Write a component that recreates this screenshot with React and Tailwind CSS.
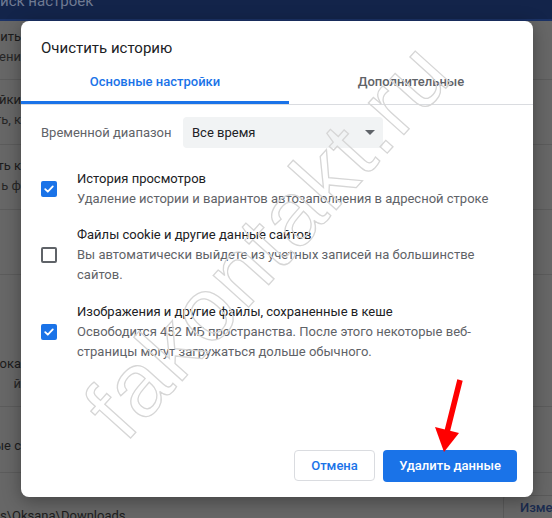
import React from 'react';

const rows = [
	{ h: 'h-[59px]', pt: 'pt-[6px]', lines: ['ить', 'ени'] },
	{ h: 'h-[65px]', pt: 'pt-[10px]', lines: ['йки', 'ть, к'] },
	{ h: 'h-[65px]', pt: 'pt-[11px]', lines: ['ть к', 'ь ф'] },
	{ h: 'h-[65px]', pt: 'pt-[10px]', lines: [] },
	{ h: 'h-[132px]', pt: 'pt-[79px]', lines: ['ока', 'й'] },
	{ h: 'h-[66px]', pt: 'pt-[29px]', lines: ['ые с'] },
];

const CheckBox = ({ checked }) =>
	checked ? (
		<div className="flex h-4 w-4 shrink-0 items-center justify-center rounded-[2px] bg-[#1a73e8]">
			<svg width="12" height="12" viewBox="0 0 12 12" fill="none">
				<path d="M2.2 6.2 4.8 8.7 9.8 3.4" stroke="white" strokeWidth="1.8" strokeLinecap="round" strokeLinejoin="round" />
			</svg>
		</div>
	) : (
		<div className="h-4 w-4 shrink-0 rounded-[2px] border-2 border-[#5f6368]" />
	);

const Item = ({ checked, title, text, className = '' }) => (
	<div className={`flex items-center gap-5 px-5 ${className}`}>
		<CheckBox checked={checked} />
		<div className="flex-1 text-[13px] leading-[20px]">
			<div className="text-[#202124]">{title}</div>
			<div className="text-[#5f6368]">{text}</div>
		</div>
	</div>
);

const App = () => {
	return (
		<div className="relative h-[518px] w-[552px] overflow-hidden bg-[#676767] font-['Roboto',sans-serif]">
			{/* dimmed settings page behind the dialog */}
			<div className="flex h-full flex-col">
				<div className="h-[21px] shrink-0 overflow-hidden border-b-2 border-[#1b3266] bg-[#13244a]">
					<div className="-mt-[9px] text-[15px] leading-[20px] text-[#6f7a92]">иск настроек</div>
				</div>
				{rows.map((row, i) => (
					<div key={i} className={`flex shrink-0 border-b border-[#5c5c5c] ${row.h}`}>
						<div className={`flex w-[21px] flex-col overflow-hidden ${row.pt}`}>
							{row.lines.map((line, j) => (
								<div
									key={line}
									className={`flex justify-end whitespace-nowrap text-[13px] leading-[20px] ${j === 0 ? 'text-[#1c1c1c]' : 'text-[#262626]'}`}
								>
									{line}
								</div>
							))}
						</div>
					</div>
				))}
				<div className="flex flex-1">
					<div className="flex-1 pt-[33px] text-[13px] leading-[20px] text-[#1c1c1c] whitespace-nowrap">s\Oksana\Downloads</div>
					<div className="mt-[22px] w-[49px] rounded-tl-[4px] border-l border-t border-[#5a5a5a] pl-[16px] pt-[2px] text-[13px] font-medium leading-[20px] text-[#1b2c50] whitespace-nowrap overflow-hidden">
						Изменить
					</div>
				</div>
			</div>

			{/* dialog */}
			<div className="absolute left-[21px] top-[21px] flex h-[476px] w-[512px] flex-col rounded-[8px] bg-white shadow-[0_4px_18px_rgba(0,0,0,0.35)]">
				<h2 className="px-5 pt-[17px] text-[15px] leading-[20px] text-[#202124]">Очистить историю</h2>

				<div className="mt-[5px] flex border-b border-[#dadce0]">
					<div className="flex w-[268px] flex-col">
						<div className="flex h-[38px] items-center justify-center text-[13px] font-medium text-[#1a73e8]">
							Основные настройки
						</div>
						<div className="h-[3px] bg-[#1a73e8]" />
					</div>
					<div className="flex flex-1 items-start justify-center">
						<div className="flex h-[38px] items-center text-[13px] font-medium text-[#5f6368]">Дополнительные</div>
					</div>
				</div>

				<div className="mt-[12px] flex items-center px-5">
					<div className="w-[142px] text-[13px] text-[#5f6368]">Временной диапазон</div>
					<div className="flex h-[31px] w-[200px] items-center rounded-[4px] bg-[#f1f3f4] pl-[9px] pr-[8px] text-[13px] text-[#202124]">
						Все время
						<svg className="ml-auto" width="10" height="5" viewBox="0 0 10 5">
							<polygon points="0,0 10,0 5,5" fill="#5f6368" />
						</svg>
					</div>
				</div>

				<Item
					className="mt-[21px]"
					checked
					title="История просмотров"
					text="Удаление истории и вариантов автозаполнения в адресной строке"
				/>
				<Item
					className="mt-4"
					title="Файлы cookie и другие данные сайтов"
					text="Вы автоматически выйдете из учетных записей на большинстве сайтов."
				/>
				<Item
					className="mt-[17px]"
					checked
					title="Изображения и другие файлы, сохраненные в кеше"
					text="Освободится 452 МБ пространства. После этого некоторые веб-страницы могут загружаться дольше обычного."
				/>

				<div className="mt-auto flex justify-end gap-2 pb-[15px] pr-[16px]">
					<button
						type="button"
						className="h-[31px] w-[81px] rounded-[4px] border border-[#dadce0] bg-white text-[13px] font-medium text-[#1a73e8]"
					>
						Отмена
					</button>
					<button
						type="button"
						className="h-[32px] w-[134px] rounded-[4px] bg-[#1a73e8] text-[13px] font-medium text-white"
					>
						Удалить данные
					</button>
				</div>
			</div>

			{/* watermark */}
			<span className="pointer-events-none absolute left-[268px] top-[240px] -translate-x-1/2 -translate-y-1/2 rotate-[-48deg] whitespace-nowrap font-['Liberation_Sans',sans-serif] text-[90px] tracking-[2px] text-transparent [-webkit-text-stroke:1.3px_#d6d6d6]">
				fakontakt.ru
			</span>

			{/* red arrow */}
			<svg className="pointer-events-none absolute left-0 top-0" width="552" height="518" viewBox="0 0 552 518">
				<line x1="460" y1="380" x2="447" y2="432" stroke="#ff0000" strokeWidth="5.5" />
				<polygon points="435,427 459,433 444,452" fill="#ff0000" />
			</svg>
		</div>
	);
};

export default App;
